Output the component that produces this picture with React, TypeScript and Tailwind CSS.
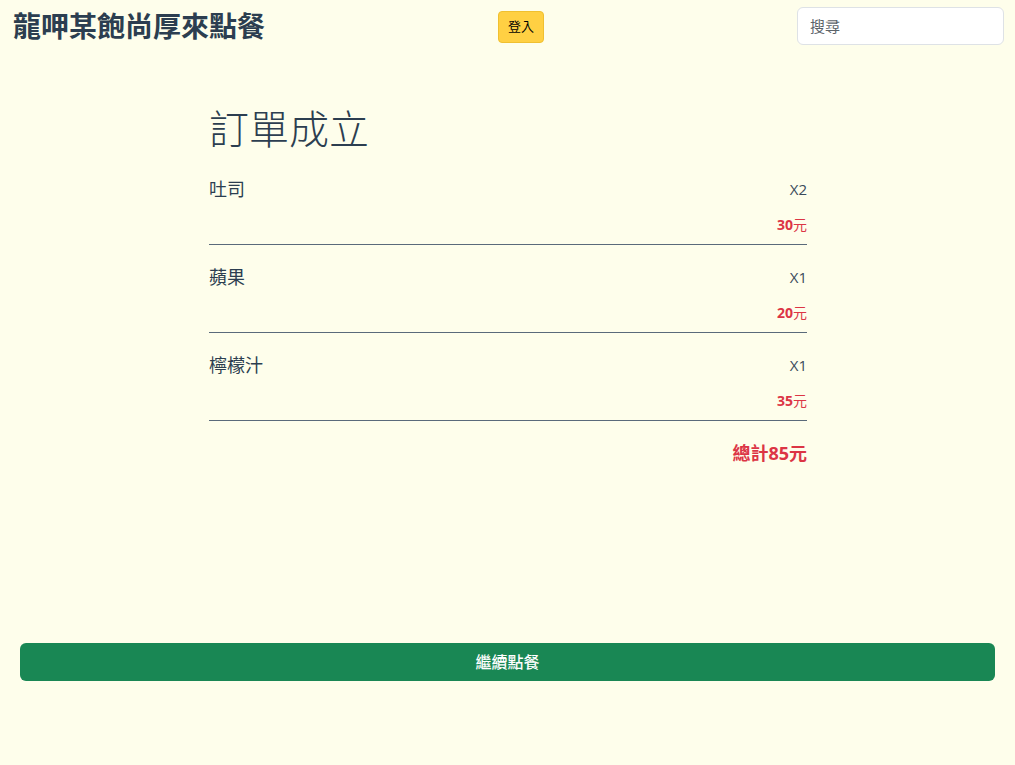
import React from 'react';

const items = [
  { name: '吐司', qty: 2, price: 30 },
  { name: '蘋果', qty: 1, price: 20 },
  { name: '檸檬汁', qty: 1, price: 35 },
];

const App: React.FC = () => {
  return (
    <div
      className="min-h-[765px] bg-[#fefeeb] text-[#2c3e50] flex flex-col"
      style={{ fontFamily: '"Open Sans", "Noto Sans CJK TC", sans-serif' }}
    >
      <nav className="flex items-center justify-between pl-[13px] pr-[11px] pt-[7px]">
        <h1 className="text-[28px] font-bold w-[300px] leading-[38px]">龍呷某飽尚厚來點餐</h1>
        <button className="bg-[#ffd043] border border-[#f0c030] rounded text-[13px] text-black px-[9px] h-[32px] mt-[1px] ml-[25px]">
          登入
        </button>
        <div className="w-[300px] flex justify-end">
          <input
            placeholder="搜尋"
            className="w-[207px] h-[38px] rounded-md border border-[#dee2e6] bg-white px-[12px] text-[15px] placeholder:text-[#5c636a] outline-none"
          />
        </div>
      </nav>

      <main className="w-[598px] mt-[60px] ml-[209px]">
        <h2 className="text-[40px] font-light leading-[48px] mb-[23px]">訂單成立</h2>
        {items.map((it) => (
          <div key={it.name} className="border-b border-[#5a6a7a] pb-[9px] mb-[19px]">
            <div className="flex justify-between items-center">
              <span className="text-[18px] font-normal">{it.name}</span>
              <span className="text-[15px] text-[#3a4a5a]">X{it.qty}</span>
            </div>
            <div className="text-right text-[14px] font-bold text-[#dc3545] mt-[11px]">
              {it.price}<span className="font-normal">元</span>
            </div>
          </div>
        ))}
        <div className="text-right text-[18px] font-bold text-[#dc3545] mt-[8px]">總計85元</div>
      </main>

      <div className="px-[20px] mt-[176px]">
        <button className="w-full h-[38px] rounded-md bg-[#198754] text-white text-[16px] font-medium">
          繼續點餐
        </button>
      </div>
    </div>
  );
};

export default App;
